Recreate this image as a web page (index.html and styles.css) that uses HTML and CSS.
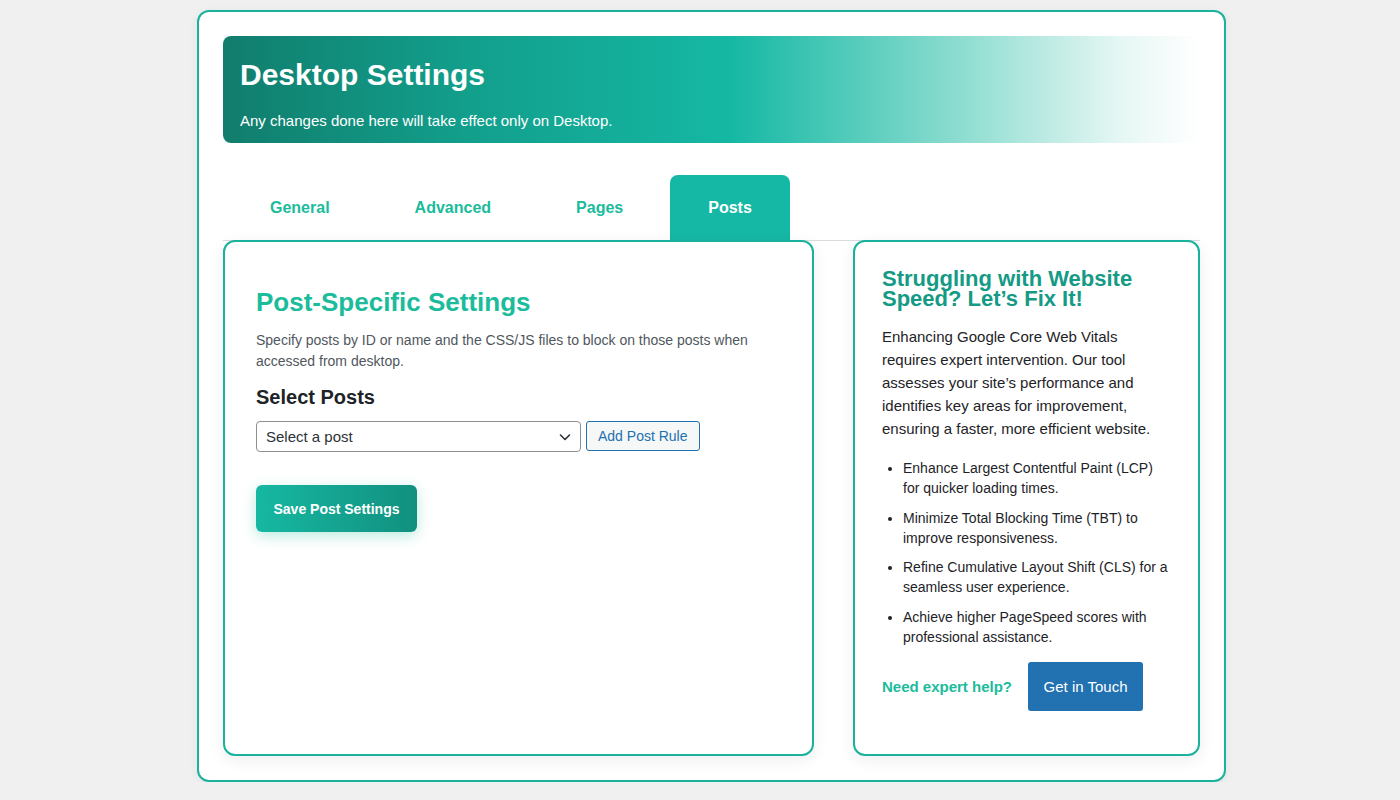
FILE: index.html
```html
<!DOCTYPE html>
<html lang="en">
<head>
<meta charset="utf-8">
<title>Desktop Settings</title>
<link rel="stylesheet" href="styles.css">
</head>
<body>
<div class="wrap">
  <div class="hero">
    <h1>Desktop Settings</h1>
    <p>Any changes done here will take effect only on Desktop.</p>
  </div>
  <nav class="tabs">
    <a class="tab">General</a>
    <a class="tab">Advanced</a>
    <a class="tab">Pages</a>
    <a class="tab active">Posts</a>
  </nav>
  <div class="row">
    <section class="card main">
      <h2>Post-Specific Settings</h2>
      <p class="desc">Specify posts by ID or name and the CSS/JS files to block on those posts when accessed from desktop.</p>
      <h3>Select Posts</h3>
      <div class="controls">
        <div class="select">
          <span>Select a post</span>
          <svg width="14" height="14" viewBox="0 0 14 14"><path d="M2.5 5 L7 9.5 L11.5 5" fill="none" stroke="#2c3338" stroke-width="1.6" stroke-linecap="round" stroke-linejoin="round"/></svg>
        </div>
        <button class="btn-secondary">Add Post Rule</button>
      </div>
      <button class="btn-save">Save Post Settings</button>
    </section>
    <aside class="card side">
      <h2>Struggling with Website Speed? Let’s Fix It!</h2>
      <p>Enhancing Google Core Web Vitals requires expert intervention. Our tool assesses your site’s performance and identifies key areas for improvement, ensuring a faster, more efficient website.</p>
      <ul>
        <li>Enhance Largest Contentful Paint (LCP) for quicker loading times.</li>
        <li>Minimize Total Blocking Time (TBT) to improve responsiveness.</li>
        <li>Refine Cumulative Layout Shift (CLS) for a seamless user experience.</li>
        <li>Achieve higher PageSpeed scores with professional assistance.</li>
      </ul>
      <div class="cta">
        <span class="cta-text">Need expert help?</span>
        <button class="btn-primary">Get in Touch</button>
      </div>
    </aside>
  </div>
</div>
</body>
</html>
```
FILE: styles.css
```css
html, body {
  margin: 0;
  padding: 0;
  background: #f0f0f0;
  font-family: "Liberation Sans", Arial, sans-serif;
  color: #1d2327;
}
body {
  padding: 10px 0 0 197px;
}
.wrap {
  box-sizing: border-box;
  width: 1029px;
  height: 772px;
  background: #fff;
  border: 2px solid #1ab29c;
  border-radius: 12px;
  padding: 24px;
  box-shadow: 0 2px 10px rgba(0,0,0,0.06);
}
.hero {
  height: 107px;
  box-sizing: border-box;
  padding: 21px 17px 12px;
  border-radius: 8px;
  background: linear-gradient(90deg, #117d6d 0%, #129f8c 25%, #15b8a4 52%, #8adccf 75%, #e6f7f4 92%, #ffffff 100%);
  color: #fff;
}
.hero h1 {
  margin: 0;
  font-size: 30px;
  line-height: 36px;
  font-weight: 700;
}
.hero p {
  margin: 18px 0 0;
  font-size: 15px;
  line-height: 20px;
}
.tabs {
  display: flex;
  gap: 9px;
  margin-top: 32px;
  padding-left: 9px;
  border-bottom: 1px solid #dcdcde;
  height: 66px;
  box-sizing: border-box;
}
.tab {
  display: block;
  padding: 23px 38px;
  font-size: 16px;
  line-height: 20px;
  font-weight: 700;
  color: #1abc9c;
  border-radius: 8px 8px 0 0;
  height: 66px;
  box-sizing: border-box;
}
.tab.active {
  background: #15b8a4;
  color: #fff;
}
.row {
  display: flex;
  gap: 39px;
  margin-top: -1px;
  height: 516px;
  position: relative;
}
.card {
  box-sizing: border-box;
  background: #fff;
  border: 2px solid #1ab29c;
  border-radius: 12px;
  box-shadow: 0 4px 16px rgba(0,0,0,0.07);
}
.main {
  width: 591px;
  padding: 43px 31px 30px;
}
.main h2 {
  margin: 0;
  font-size: 26px;
  line-height: 34px;
  font-weight: 700;
  color: #1abc9c;
}
.desc {
  margin: 11px 0 0;
  font-size: 14px;
  line-height: 21px;
  color: #50575e;
}
.main h3 {
  margin: 12px 0 0;
  font-size: 20px;
  line-height: 26px;
  font-weight: 700;
  color: #1d2327;
}
.controls {
  display: flex;
  gap: 5px;
  margin-top: 11px;
  align-items: flex-start;
}
.select {
  box-sizing: border-box;
  width: 325px;
  height: 31px;
  border: 1px solid #8c8f94;
  border-radius: 4px;
  display: flex;
  align-items: center;
  justify-content: space-between;
  padding: 0 8px 0 9px;
  font-size: 15px;
  color: #2c3338;
  background: #fff;
}
.select svg {
  display: block;
}
.btn-secondary {
  box-sizing: border-box;
  height: 30px;
  padding: 0 11px;
  border: 1px solid #2271b1;
  border-radius: 3px;
  background: #f6f7f7;
  color: #2271b1;
  font-family: inherit;
  font-size: 14px;
}
.btn-save {
  display: block;
  margin-top: 33px;
  box-sizing: border-box;
  width: 161px;
  height: 47px;
  border: none;
  border-radius: 6px;
  background: linear-gradient(90deg, #16b8a2 0%, #12907f 100%);
  color: #fff;
  font-family: inherit;
  font-size: 14px;
  font-weight: 700;
  box-shadow: 0 4px 14px rgba(26,188,156,0.3);
}
.side {
  flex: 1;
  padding: 27px 27px 24px;
}
.side h2 {
  margin: 0;
  font-size: 22px;
  line-height: 20px;
  font-weight: 700;
  color: #149a85;
}
.side p {
  margin: 16px 0 0;
  font-size: 15px;
  line-height: 23px;
  color: #1d2327;
}
.side ul {
  margin: 18px 0 0;
  padding-left: 21px;
}
.side li {
  font-size: 14px;
  line-height: 20px;
  margin-bottom: 9.5px;
  color: #1d2327;
}
.cta {
  display: flex;
  align-items: center;
  gap: 16px;
  margin-top: 15px;
}
.cta-text {
  font-size: 15px;
  font-weight: 700;
  color: #1abc9c;
}
.btn-primary {
  box-sizing: border-box;
  width: 115px;
  height: 49px;
  border: none;
  border-radius: 3px;
  background: #2271b1;
  color: #fff;
  font-family: inherit;
  font-size: 15px;
}
```
